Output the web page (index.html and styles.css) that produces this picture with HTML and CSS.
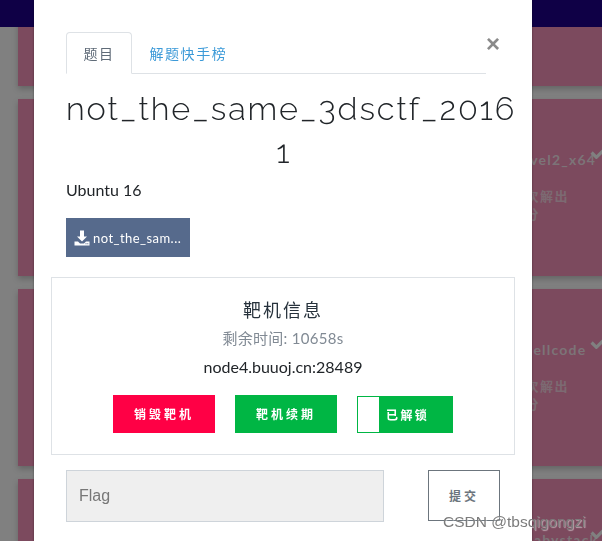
FILE: index.html
```html
<!DOCTYPE html>
<html lang="zh">
<head>
<meta charset="utf-8">
<title>not_the_same_3dsctf_2016</title>
<link rel="stylesheet" href="styles.css">
</head>
<body>
<div class="page">
  <header class="nav"></header>
  <main class="cards">
    <div class="card"></div><div class="card"></div><div class="card"></div>
    <div class="card"></div><div class="card"></div>
    <div class="card">
      <svg class="check" viewBox="0 0 16 12"><path d="M1.5 6l4.5 4.5 8.5-8.5" /></svg>
      <div class="card-name">level2_x64</div>
      <div class="card-sub">1 次解出</div>
      <div class="card-sub">1 分</div>
    </div>
    <div class="card"></div><div class="card"></div>
    <div class="card">
      <svg class="check" viewBox="0 0 16 12"><path d="M1.5 6l4.5 4.5 8.5-8.5" /></svg>
      <div class="card-name">shellcode</div>
      <div class="card-sub">1 次解出</div>
      <div class="card-sub">1 分</div>
    </div>
    <div class="card"></div><div class="card"></div>
    <div class="card">
      <svg class="check" viewBox="0 0 16 12"><path d="M1.5 6l4.5 4.5 8.5-8.5" /></svg>
      <div class="card-name">_babystack</div>
    </div>
  </main>
</div>

<section class="modal">
  <div class="tabs-row">
    <nav class="tabs">
      <a class="tab tab-active">题目</a>
      <a class="tab">解题快手榜</a>
    </nav>
    <span class="close">×</span>
  </div>

  <h1 class="title"><span class="title-first">not_the_same_3dsctf_2016</span><span class="title-last">1</span></h1>
  <p class="desc">Ubuntu 16</p>

  <a class="download">
    <svg class="download-icon" viewBox="0 0 16 16"><path d="M6 0.5h4v6h3l-5 5-5-5h3z"/><path fill-rule="evenodd" d="M0.5 11.5h3.5l2 2h4l2-2h3.5v4h-15z M11.5 13.2v1h1v-1z M13.3 13.2v1h1v-1z"/></svg>
    <span>not_the_sam...</span>
  </a>

  <div class="info">
    <h2 class="info-title">靶机信息</h2>
    <div class="info-time">剩余时间: 10658s</div>
    <div class="info-host">node4.buuoj.cn:28489</div>
    <div class="info-actions">
      <button class="btn btn-red">销毁靶机</button>
      <button class="btn btn-green">靶机续期</button>
      <div class="toggle"><span class="toggle-knob"></span><span class="toggle-label">已解锁</span></div>
    </div>
  </div>

  <form class="flag-row">
    <input class="flag-input" placeholder="Flag">
    <button class="submit" type="button">提交</button>
  </form>
</section>

<div class="watermark">CSDN @tbsqigongzi</div>
</body>
</html>
```

FILE: styles.css
```css
* { box-sizing: border-box; }

html, body {
  margin: 0;
  height: 100%;
  overflow: hidden;
  background: #808080;
  font-family: "Lato", "Noto Sans CJK SC", sans-serif;
}

.page { height: 541px; overflow: hidden; }

.nav {
  position: fixed;
  top: 0;
  left: 0;
  right: 0;
  height: 27px;
  background: #0f0046;
  z-index: 1;
}

.cards {
  display: grid;
  grid-template-columns: repeat(3, 200px);
  grid-auto-rows: 177px;
  gap: 13px;
  margin-top: -91px;
  padding-left: 18px;
}

.card {
  position: relative;
  background: #7c4a5e;
  box-shadow: 0 3px 6px rgba(0, 0, 0, 0.22);
  padding: 52px 0 0 68px;
  white-space: nowrap;
}

.check {
  position: absolute;
  top: 47px;
  left: 146px;
  width: 17px;
  height: 13px;
  fill: none;
  stroke: #808080;
  stroke-width: 3;
}

.card-name {
  margin: 0 0 18px 5px;
  font: 700 14px/18px "Lato", sans-serif;
  letter-spacing: 1.2px;
  color: #7c7478;
}

.card-sub {
  font: 700 13px/18px "Noto Sans CJK SC", sans-serif;
  letter-spacing: 1.5px;
  color: #7c6a72;
}

.modal {
  position: absolute;
  top: 0;
  left: 34px;
  width: 498px;
  height: 541px;
  overflow: hidden;
  background: #fff;
  box-shadow: 0 0 2px rgba(0, 0, 0, 0.4);
  padding: 32px 46px 0 32px;
  z-index: 2;
  color: #212529;
}

.tabs-row { position: relative; }

.tabs {
  display: flex;
  height: 42px;
  border-bottom: 1px solid #dee2e6;
}

.tab {
  display: flex;
  align-items: center;
  height: 42px;
  padding: 0 16.4px;
  border: 1px solid transparent;
  font: 14px/20px "Noto Sans CJK SC", sans-serif;
  letter-spacing: 1.6px;
  color: #3c9ad8;
}

.tab-active {
  border-color: #dee2e6 #dee2e6 #fff;
  border-radius: 4px 4px 0 0;
  color: #5f6b78;
}

.close {
  position: absolute;
  top: 0;
  right: -14px;
  font: 700 24px/24px "Liberation Sans", sans-serif;
  color: #8a8a8a;
}

.title {
  margin: 13px 0 0;
  font: 300 32.5px/43px "Raleway", "Lato", sans-serif;
  letter-spacing: 1.85px;
  font-feature-settings: "onum";
  color: #212529;
}

.title-first { display: block; white-space: nowrap; }
.title-last { display: block; text-align: center; width: 434px; letter-spacing: 0; }

.desc {
  margin: 5px 0 0;
  font: 16px/24px "Lato", sans-serif;
  color: #212529;
}

.download {
  display: flex;
  align-items: center;
  gap: 3px;
  width: 124px;
  height: 39px;
  margin-top: 16px;
  padding-left: 8px;
  background: #566a8c;
  color: #fff;
  font: 13px/18px "Lato", sans-serif;
  letter-spacing: 0.45px;
  white-space: nowrap;
}

.download-icon { width: 16px; height: 16px; fill: #fff; flex: none; }

.info {
  width: 464px;
  height: 178px;
  margin: 20px 0 0 -15px;
  padding-top: 18px;
  border: 1px solid #dee2e6;
  text-align: center;
}

.info-title {
  margin: 0;
  font: 400 18px/26px "Noto Sans CJK SC", sans-serif;
  letter-spacing: 2px;
  color: #27323c;
}

.info-time {
  margin-top: 4px;
  font: 15px/24px "Lato", "Noto Sans CJK SC", sans-serif;
  letter-spacing: 0.3px;
  color: #818a94;
}

.info-host {
  margin-top: 5px;
  font: 16px/24px "Lato", sans-serif;
  color: #212529;
}

.info-actions {
  display: flex;
  justify-content: center;
  align-items: flex-end;
  gap: 20px;
  margin-top: 16px;
}

.btn {
  width: 102px;
  height: 38px;
  border: 0;
  padding: 0;
  color: #fff;
  font: 700 12px/16px "Noto Sans CJK SC", sans-serif;
  letter-spacing: 3px;
}

.btn-red { background: #ff0045; }
.btn-green { background: #00b644; }

.toggle {
  display: flex;
  align-items: center;
  width: 96px;
  height: 37px;
  border: 1px solid #00b644;
  background: #00b644;
  color: #fff;
  font: 700 12px/16px "Noto Sans CJK SC", sans-serif;
  letter-spacing: 2.4px;
}

.toggle-knob { width: 21px; height: 35px; background: #fff; flex: none; }
.toggle-label { margin-left: 7px; }

.flag-row {
  display: flex;
  align-items: flex-start;
  margin-top: 15px;
}

.flag-input {
  flex: none;
  width: 318px;
  height: 52px;
  padding: 0 12px;
  border: 1px solid #ced4da;
  border-radius: 0;
  background: #efefef;
  font: 16px "Liberation Sans", sans-serif;
  outline: none;
}

.flag-input::placeholder { color: #777; opacity: 1; }

.submit {
  flex: none;
  width: 72px;
  height: 51px;
  margin-left: 44px;
  padding: 0;
  border: 1px solid #6c757d;
  background: #fff;
  color: #6c757d;
  font: 700 12px/16px "Noto Sans CJK SC", sans-serif;
  letter-spacing: 3px;
}

.watermark {
  position: absolute;
  top: 513px;
  left: 443px;
  z-index: 3;
  font: 15.5px/18px "Liberation Sans", sans-serif;
  color: #7c7c7c;
  text-shadow: 1px 1px 1px rgba(255, 255, 255, 0.5);
  white-space: nowrap;
}
```
